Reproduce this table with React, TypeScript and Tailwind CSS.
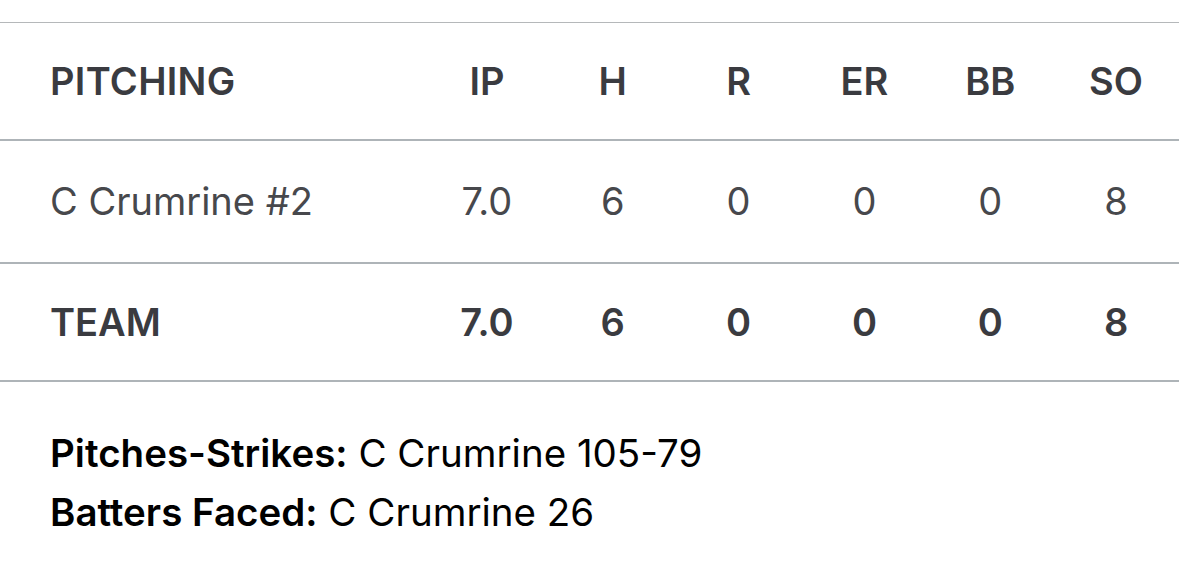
const columns = ["IP", "H", "R", "ER", "BB", "SO"];

const rows = [
  { name: "C Crumrine #2", stats: ["7.0", "6", "0", "0", "0", "8"], total: false },
  { name: "TEAM", stats: ["7.0", "6", "0", "0", "0", "8"], total: true },
];

export default function App() {
  return (
    <div
      className="h-[586px] w-[1179px] overflow-hidden bg-white pt-[22px]"
      style={{ fontFamily: "Inter, 'Liberation Sans', sans-serif" }}
    >
      <div className="border-t border-[#b5b8ba]">
        <div className="grid h-[118px] grid-cols-[424px_repeat(6,1fr)] items-center border-b-2 border-[#aeb4b8] text-[38px] font-semibold text-[#3a3b40]">
          <div className="pl-[50px] tracking-[0.3px]">PITCHING</div>
          {columns.map((c) => (
            <div key={c} className="text-center">
              {c}
            </div>
          ))}
        </div>
        {rows.map((row) => (
          <div
            key={row.name}
            className={
              "grid grid-cols-[424px_repeat(6,1fr)] items-center border-b-2 border-[#aeb4b8] text-[38px] " +
              (row.total ? "h-[118px] font-semibold text-[#3a3b40]" : "h-[123px] font-normal text-[#47484c]")
            }
          >
            <div className="pl-[50px]">{row.name}</div>
            {row.stats.map((s, i) => (
              <div key={i} className="text-center">
                {s}
              </div>
            ))}
          </div>
        ))}
      </div>
      <div className="pl-[50px] pt-[42px] text-[38.5px] leading-[59px] text-black">
        <p>
          <span className="font-semibold">Pitches-Strikes:</span> C Crumrine 105-79
        </p>
        <p>
          <span className="font-semibold">Batters Faced:</span> C Crumrine 26
        </p>
      </div>
    </div>
  );
}
